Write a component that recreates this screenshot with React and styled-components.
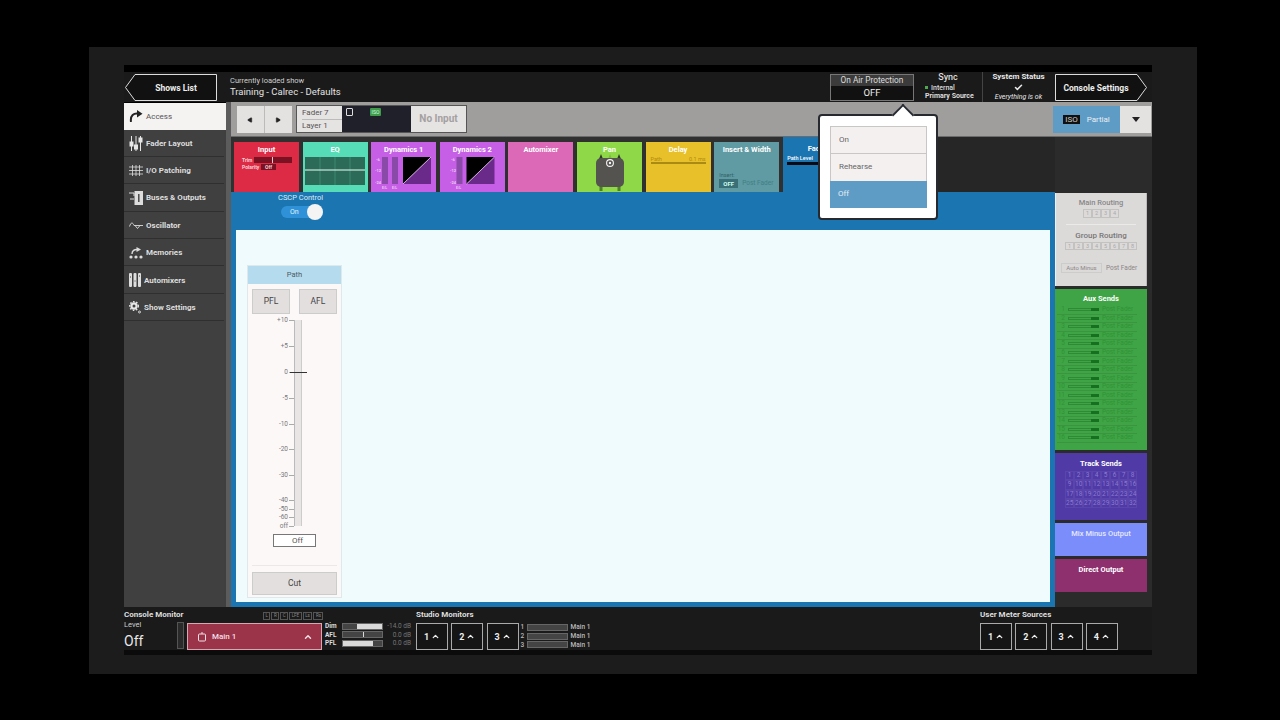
import React from 'react'
import styled, { createGlobalStyle } from 'styled-components'
import { ChevronUp, Play, Check } from 'lucide-react'

const Global = createGlobalStyle`
html, body { margin: 0; padding: 0; background: #000; height: 720px; overflow: hidden; }
body { font-family: Roboto, "Liberation Sans", sans-serif; color: #fff; }
* { box-sizing: border-box; }
`

const Page = styled.div`
width: 1280px;
height: 720px;
padding: 47px 83px 46px 89px;
background: #000;
`
const Frame = styled.div`
width: 1108px;
height: 627px;
padding: 18px 45px 19px 35px;
background: #1c1c1c;
`
const Console = styled.div`
width: 1028px;
height: 590px;
background: #000;
display: flex;
flex-direction: column;
position: relative;
`
const Header = styled.div`
margin-top: 7px;
height: 30px;
background: #1a1a1a;
display: flex;
align-items: flex-start;
flex: none;
`
const ArrowBtn = styled.div`
width: 92px;
height: 27px;
margin: 2px ${p => p.$right ? '5px' : '0'} 0 ${p => p.$right ? '0' : '1px'};
flex: none;
position: relative;
display: flex;
align-items: center;
justify-content: center;
padding: ${p => p.$right ? '0 10px 0 0' : '0 0 0 10px'};
font-size: 8.5px;
font-weight: 700;
color: #eee;
`
const ArrowShape = styled.svg`
position: absolute;
left: 0;
top: 0;
`
const ArrowLabel = styled.span`
position: relative;
`
const ShowInfo = styled.div`
margin-left: 13px;
padding-top: 4px;
flex: 1;
`
const ShowLabel = styled.div`
font-size: 7.5px;
line-height: 9px;
color: #cfcfcf;
`
const ShowName = styled.div`
font-size: 9.5px;
line-height: 12px;
margin-top: 1px;
color: #e2e2e2;
`
const Protection = styled.div`
width: 84px;
height: 27px;
margin-top: 2px;
border: 1px solid #777;
background: #111;
display: flex;
flex-direction: column;
flex: none;
`
const ProtTitle = styled.div`
height: 11px;
background: #3b3b3b;
font-size: 8.3px;
line-height: 11px;
text-align: center;
color: #ddd;
`
const ProtValue = styled.div`
flex: 1;
font-size: 9.5px;
line-height: 14px;
text-align: center;
color: #eee;
`
const SyncBox = styled.div`
width: 68px;
flex: none;
font-size: 7px;
line-height: 8px;
font-weight: 500;
color: #ddd;
padding-left: 11px;
`
const SyncTitle = styled.div`
font-size: 9px;
line-height: 11px;
text-align: center;
margin: 0 0 1px -11px;
`
const SyncLine = styled.div`
white-space: nowrap;
font-weight: ${p => p.$bold ? 700 : 500};
`
const Dot = styled.span`
display: inline-block;
width: 3px;
height: 3px;
background: #4ea84e;
margin-right: 3px;
vertical-align: 1px;
`
const StatusBox = styled.div`
width: 72px;
height: 30px;
margin-right: 1px;
flex: none;
border-left: 1px solid #444;
display: flex;
flex-direction: column;
align-items: center;
color: #e8e8e8;
`
const StatusTitle = styled.div`
font-size: 8px;
font-weight: 700;
line-height: 10px;
margin-bottom: 1px;
`
const StatusText = styled.div`
font-size: 7px;
font-style: italic;
line-height: 8px;
margin-top: 1px;
`
const Body = styled.div`
flex: 1;
display: flex;
min-height: 0;
`
const Side = styled.div`
width: 102px;
flex: none;
background: #3f3f3f;
display: flex;
flex-direction: column;
`
const SideItem = styled.div`
height: ${p => p.$active ? '27.5px' : '27.4px'};
flex: none;
margin-right: ${p => p.$active ? '0' : '2px'};
background: ${p => p.$active ? '#f5f2f2' : '#404040'};
border-top: ${p => p.$active ? '1px solid #000' : 'none'};
border-bottom: ${p => p.$active ? 'none' : '1px solid #2f2f2f'};
padding-top: ${p => p.$active ? '0' : '1px'};
display: flex;
align-items: center;
padding-left: 5px;
gap: 3px;
font-size: 8px;
font-weight: ${p => p.$active ? 400 : 700};
color: ${p => p.$active ? '#555' : '#ddd'};
`
const SideRest = styled.div`
flex: 1;
background: #404040;
margin-right: 2px;
`
const Main = styled.div`
flex: 1;
background: #262626;
border-left: 5px solid #5c5c5c;
display: flex;
flex-direction: column;
min-width: 0;
`
const Toolbar = styled.div`
height: 35px;
flex: none;
background: #a09d9d;
border-bottom: 1px solid #6b6b6b;
display: flex;
align-items: flex-start;
padding: 4px 0 0 6px;
`
const NavGroup = styled.div`
display: flex;
height: 27px;
background: #e4e1e1;
margin-right: 4px;
`
const NavBtn = styled.div`
width: 27.5px;
border-right: ${p => p.$divide ? '1px solid #bdbaba' : 'none'};
display: flex;
align-items: center;
justify-content: center;
color: #222;
`
const FaderCard = styled.div`
display: flex;
height: 28px;
width: 171px;
margin-top: -1px;
background: #e6e3e3;
border: 1px solid #555;
`
const FaderNames = styled.div`
width: 45px;
font-size: 8px;
line-height: 12px;
color: #555;
padding: 1px 0 0 5px;
`
const FaderRow = styled.div`
border-bottom: ${p => p.$line ? '1px solid #bbb' : 'none'};
height: 13px;
`
const FaderDark = styled.div`
width: 69px;
background: #20202a;
position: relative;
`
const Badge = styled.div`
position: absolute;
left: 4px;
top: 2px;
width: 7px;
height: 8px;
border: 1px solid #ddd;
border-radius: 1px;
`
const Iso = styled.div`
position: absolute;
left: 28px;
top: 2px;
width: 11px;
height: 8px;
border-radius: 1px;
background: #3f9a49;
color: #cfe;
font-size: 5px;
line-height: 8px;
text-align: center;
`
const NoInput = styled.div`
flex: 1;
text-align: center;
font-size: 10px;
font-weight: 700;
line-height: 26px;
color: #a3a0a0;
`
const Spacer = styled.div`
flex: 1;
`
const IsoGroup = styled.div`
display: flex;
height: 27px;
margin-right: 1px;
`
const IsoBlue = styled.div`
width: 67px;
background: #5f9cc5;
display: flex;
align-items: center;
justify-content: center;
gap: 7px;
font-size: 8px;
color: #e8eef4;
`
const IsoTag = styled.span`
background: #111;
color: #ccc;
font-size: 8px;
padding: 0 2px;
line-height: 9px;
`
const IsoDrop = styled.div`
width: 31px;
background: #e4e1e1;
display: flex;
align-items: center;
justify-content: center;
&::after {
  content: "";
  border-left: 4px solid transparent;
  border-right: 4px solid transparent;
  border-top: 5px solid #222;
}
`
const Workspace = styled.div`
flex: 1;
display: flex;
min-height: 0;
`
const Center = styled.div`
flex: 1;
display: flex;
flex-direction: column;
min-width: 0;
`
const Strip = styled.div`
height: 55px;
flex: none;
display: flex;
align-items: flex-start;
`
const Tiles = styled.div`
display: flex;
gap: 3.6px;
height: 55px;
padding: 5px 4px 0 3px;
background: #2f302f;
`
const Tile = styled.div`
width: 65px;
height: 50px;
background: ${p => p.$bg};
color: #fff;
font-size: 7.5px;
font-weight: 700;
text-align: center;
line-height: 15px;
position: relative;
`
const FaderTile = styled.div`
width: 68px;
height: 55px;
background: #1b75b0;
font-size: 7.5px;
font-weight: 700;
text-align: center;
line-height: 24px;
position: relative;
`
const PathLevel = styled.div`
position: absolute;
left: 4px;
top: 18px;
font-size: 5.5px;
font-weight: 500;
line-height: 7px;
`
const PathBar = styled.div`
position: absolute;
left: 4px;
top: 25px;
width: 40px;
height: 3px;
background: #0a0a14;
`
const Content = styled.div`
flex: 1;
background: #1b75b0;
display: flex;
flex-direction: column;
min-height: 0;
`
const CscpRow = styled.div`
height: 38px;
flex: none;
padding: 1px 0 0 47px;
width: 130px;
`
const CscpLabel = styled.div`
font-size: 7.5px;
line-height: 9px;
text-align: left;
color: #dcebf5;
`
const Toggle = styled.div`
margin-top: 4px;
margin-left: 3px;
width: 42px;
height: 12px;
border-radius: 6px;
background: #2f92d8;
position: relative;
font-size: 7px;
line-height: 12px;
padding-left: 9px;
color: #e4f2fb;
&::after {
  content: "";
  position: absolute;
  right: 0;
  top: -2px;
  width: 16px;
  height: 16px;
  border-radius: 50%;
  background: #f4f4f4;
}
`
const Canvas = styled.div`
margin: 0 5px;
flex: none;
height: 372px;
background: #effbfd;
padding: 35px 0 0 11px;
`
const PathPanel = styled.div`
width: 95px;
height: 333px;
background: #fdf8f8;
border: 1px solid #dfe9ec;
display: flex;
flex-direction: column;
`
const PathHead = styled.div`
height: 18px;
flex: none;
background: #b5dcee;
font-size: 7.5px;
line-height: 17px;
text-align: center;
color: #4c5a63;
`
const PflRow = styled.div`
display: flex;
justify-content: space-between;
padding: 5px 4px 0 4px;
`
const PflBtn = styled.div`
width: 38px;
height: 25px;
background: #e3dfdf;
border: 1px solid #ccc;
font-size: 8.5px;
line-height: 23px;
text-align: center;
color: #444;
`
const Scale = styled.div`
position: relative;
height: 208px;
margin-top: 5px;
flex: none;
`
const Track = styled.div`
position: absolute;
left: 46px;
top: 1px;
width: 8px;
height: 206px;
background: #e9e5e5;
border-left: 1px solid #bbb;
border-right: 1px solid #ccc;
`
const Mark = styled.div`
position: absolute;
left: 0;
width: 46px;
height: 8px;
top: ${p => p.$y - 4}px;
font-size: 6.5px;
line-height: 8px;
color: #777;
text-align: right;
padding-right: 6px;
&::after {
  content: "";
  position: absolute;
  right: 0;
  top: 4px;
  width: 5px;
  height: 1px;
  background: #aaa;
}
`
const Zero = styled.div`
position: absolute;
left: 42px;
top: 53px;
width: 17px;
height: 1px;
background: #333;
`
const OffBox = styled.div`
margin: 7px 0 0 25px;
width: 43px;
height: 13px;
flex: none;
border: 1px solid #777;
background: #fff;
font-size: 8px;
line-height: 11px;
text-align: center;
padding-left: 6px;
color: #555;
`
const CutWrap = styled.div`
margin: 18px 4px 0 4px;
padding-top: 6px;
border-top: 1px solid #ece8e8;
`
const CutBtn = styled.div`
height: 23px;
background: #e3dfdf;
border: 1px solid #ccc;
font-size: 8.5px;
line-height: 21px;
text-align: center;
color: #444;
`
const Right = styled.div`
width: 97px;
flex: none;
padding: 0 5px 0 0;
background: #2b2b2b;
display: flex;
flex-direction: column;
gap: 3px;
`
const RightTop = styled.div`
height: 53px;
flex: none;
`
const Panel = styled.div`
height: ${p => p.$h}px;
flex: none;
background: ${p => p.$bg};
color: ${p => p.$fg || '#fff'};
font-size: 7.5px;
font-weight: ${p => p.$weight || 700};
text-align: center;
padding-top: ${p => p.$top || 5}px;
line-height: 9px;
`
const RoutingPanel = styled(Panel)`
border-left: 1px solid #f1efef;
border-right: 1px solid #bdbaba;
`
const RoutingTitle = styled.div`
font-size: ${p => p.$big ? 8 : 7.5}px;
line-height: 10px;
color: ${p => p.$big ? '#777' : '#888'};
font-weight: 500;
`
const NumGrid = styled.div`
display: inline-grid;
grid-template-columns: repeat(${p => p.$cols}, 9px);
margin-top: ${p => p.$mt || 1}px;
`
const Num = styled.div`
height: ${p => p.$h || 8.6}px;
border: 1px solid ${p => p.$line};
font-size: ${p => p.$size || 5.5}px;
line-height: ${p => (p.$h || 8.6) - 2}px;
color: ${p => p.$fg};
font-weight: 400;
`
const Rule = styled.div`
height: 1px;
background: #ece9e9;
margin: 6px 10px 6px;
`
const RoutingFoot = styled.div`
display: flex;
align-items: center;
gap: 4px;
padding: 0 0 0 5px;
margin-top: 13px;
font-size: 6.5px;
font-weight: 400;
color: #8a8787;
`
const AutoMinus = styled.div`
width: 41px;
height: 10px;
line-height: 8px;
font-size: 6px;
border: 1px solid #ccc;
`
const AuxList = styled.div`
margin: 3px 10px 0 2px;
`
const AuxRow = styled.div`
height: 8.55px;
display: flex;
align-items: center;
border-bottom: 1px solid #3b953f;
font-size: 6.5px;
font-weight: 400;
color: #2f9336;
`
const AuxNum = styled.div`
width: 8px;
text-align: right;
flex: none;
`
const AuxBar = styled.div`
width: 31px;
height: 3px;
margin: 0 3px 0 3px;
border: 1px solid #2f8a35;
flex: none;
position: relative;
&::after {
  content: "";
  position: absolute;
  right: -1px;
  top: -1px;
  width: 8px;
  height: 3px;
  background: #17701f;
}
`
const MixTitle = styled.div`
font-weight: 500;
color: #e4e8ff;
`
const Footer = styled.div`
height: 48px;
flex: none;
background: #1a1a1a;
display: flex;
position: relative;
border-bottom: 5px solid #0b0b0b;
`
const MonitorCol = styled.div`
width: 53px;
flex: none;
`
const FootTitle = styled.div`
font-size: 8px;
font-weight: 700;
line-height: 10px;
margin-top: 3px;
color: #dedede;
white-space: nowrap;
`
const LevelLabel = styled.div`
font-size: 7.5px;
line-height: 10px;
color: #ccc;
`
const LevelValue = styled.div`
font-size: 14px;
line-height: 16px;
margin-top: 3px;
color: #e8e8e8;
`
const LevelMeter = styled.div`
width: 7px;
height: 27px;
margin-top: 15px;
background: #2a2a2a;
border: 1px solid #555;
flex: none;
`
const MainBtn = styled.div`
width: 135px;
height: 27px;
margin: 16px 0 0 3px;
flex: none;
background: #9c3449;
border: 1px solid #d8a8b2;
display: flex;
align-items: center;
padding: 0 8px 0 9px;
font-size: 8px;
font-weight: 500;
color: #f2dfe3;
gap: 5px;
`
const Grow = styled.div`
flex: 1;
`
const DimCol = styled.div`
margin: 15px 0 0 3px;
width: 86px;
flex: none;
display: flex;
flex-direction: column;
`
const DimRow = styled.div`
display: flex;
align-items: center;
height: 8.5px;
font-size: 6.5px;
font-weight: 700;
color: #ddd;
`
const DimName = styled.div`
width: 17px;
flex: none;
`
const DimBar = styled.div`
width: 41px;
height: 7px;
background: #444;
border: 1px solid #666;
position: relative;
flex: none;
`
const DimFill = styled.div`
position: absolute;
top: 0;
bottom: 0;
background: #d9d9d9;
`
const DimVal = styled.div`
flex: 1;
text-align: right;
font-weight: 400;
color: #777;
`
const SpeakerChannels = styled.div`
position: absolute;
left: 139px;
top: 5px;
display: flex;
gap: 1px;
`
const Channel = styled.div`
height: 8px;
padding: 0 1.5px;
border: 1px solid #555;
font-size: 4.5px;
line-height: 6px;
color: #888;
`
const Studio = styled.div`
margin-left: 5px;
width: 200px;
flex: none;
`
const MonRow = styled.div`
display: flex;
gap: 3.3px;
margin-top: 3px;
align-items: flex-start;
`
const MonBtn = styled.div`
width: 32px;
height: 27px;
border: 1px solid #aaa;
background: #151515;
display: flex;
align-items: center;
justify-content: center;
font-size: 9px;
font-weight: 700;
gap: 2px;
color: #eee;
`
const MonList = styled.div`
margin-left: -1.3px;
`
const MonItem = styled.div`
display: flex;
align-items: center;
height: 8.7px;
font-size: 6.5px;
font-weight: 500;
color: #bbb;
gap: 2px;
`
const MonNum = styled.div`
width: 4px;
`
const MonMeter = styled.div`
width: 41px;
height: 7px;
background: #444;
border: 1px solid #666;
margin-right: 1px;
`
const Meters = styled.div`
margin-left: 364px;
flex: none;
`
const Popover = styled.div`
position: absolute;
left: 694px;
top: 49px;
width: 120px;
height: 106px;
background: #fff;
border: 2px solid #262a30;
border-radius: 4px;
padding: 10px 9px 0 10px;
z-index: 3;
&::before {
  content: "";
  position: absolute;
  left: 75px;
  top: -9px;
  width: 14px;
  height: 14px;
  background: #fff;
  border-left: 2px solid #262a30;
  border-top: 2px solid #262a30;
  transform: rotate(45deg);
}
`
const PopItem = styled.div`
height: 27.3px;
background: ${p => p.$on ? '#5f9cc5' : '#f4f0f0'};
border: 1px solid #c9c6c6;
border-width: ${p => p.$on ? '0' : '1px 1px 0 1px'};
font-size: 8px;
line-height: 26px;
padding-left: 8px;
color: ${p => p.$on ? '#e5eef5' : '#666'};
position: relative;
`

const Ico = styled.svg`
flex: none;
display: block;
`

const FaderIcon = () => (
  <Ico width="14" height="15" viewBox="0 0 14 15" fill="none" stroke="#e6e6e6" strokeWidth="1">
    <path d="M2.5 0v15M7 0v15M11.5 0v15" />
    <rect x="1" y="6" width="3" height="4" fill="#e6e6e6" />
    <rect x="5.5" y="9" width="3" height="4" fill="#e6e6e6" />
    <rect x="10" y="2" width="3" height="4" fill="#e6e6e6" />
  </Ico>
)
const AccessIcon = () => (
  <Ico width="14" height="12" viewBox="0 0 14 12" fill="none" stroke="#222" strokeWidth="2">
    <path d="M2 12C1 5 5 3 9 3.5" />
    <path d="M8 0l5.5 3.8L8 7.5z" fill="#222" stroke="none" />
  </Ico>
)
const PatchIcon = () => (
  <Ico width="14" height="11" viewBox="0 0 14 11" fill="none" stroke="#ddd" strokeWidth="0.8">
    <path d="M0 2h14M0 5.5h14M0 9h14M3.5 0v11M7 0v11M10.5 0v11" />
  </Ico>
)
const BusIcon = () => (
  <Ico width="14" height="14" viewBox="0 0 14 14" fill="none" stroke="#ddd" strokeWidth="1">
    <path d="M0 2h5v3M1 8h4" />
    <rect x="6" y="0.5" width="7.5" height="13" fill="#ddd" />
    <path d="M9.8 3v8" stroke="#404040" strokeWidth="1.4" />
  </Ico>
)
const WaveIcon = () => (
  <Ico width="14" height="7" viewBox="0 0 14 7" fill="none" stroke="#ddd" strokeWidth="0.9">
    <path d="M0.5 4.5C2 0 3.5 0 5 3.5h9M6 3.5l2.5 3 2.5-3" />
  </Ico>
)
const MemIcon = () => (
  <Ico width="14" height="12" viewBox="0 0 14 12" fill="none" stroke="#ddd" strokeWidth="1.4">
    <path d="M3 7C3 3.5 5.5 2.5 8 2.5" />
    <path d="M7.5 0l4.5 2.5L7.5 5z" fill="#ddd" stroke="none" />
    <circle cx="2" cy="10" r="1.6" fill="#ddd" stroke="none" />
    <circle cx="7" cy="10" r="1.6" fill="#ddd" stroke="none" />
    <circle cx="12" cy="10" r="1.6" fill="#ddd" stroke="none" />
  </Ico>
)
const AutoIcon = () => (
  <Ico width="12" height="14" viewBox="0 0 12 14" fill="#ddd">
    <rect x="0" y="0" width="3" height="14" rx="1" />
    <rect x="4.5" y="0" width="3" height="14" rx="1" />
    <rect x="9" y="0" width="3" height="14" rx="1" />
    <path d="M1 4h1M5.5 8h1M10 3h1" stroke="#404040" />
  </Ico>
)
const GearIcon = () => (
  <Ico width="12" height="13" viewBox="0 0 12 13" fill="none" stroke="#e6e6e6">
    <circle cx="5" cy="5" r="2.6" strokeWidth="2.2" />
    <circle cx="5" cy="5" r="4.4" strokeWidth="1.2" strokeDasharray="1.6 1.6" />
    <circle cx="10.5" cy="11" r="1" strokeWidth="0.9" />
  </Ico>
)
const SpeakerIcon = () => (
  <Ico width="10" height="10" viewBox="0 0 10 10" fill="none" stroke="#f2dfe3" strokeWidth="1">
    <rect x="1.5" y="2" width="7" height="7" rx="1" />
    <path d="M5 0v2" />
  </Ico>
)
const TileDrawing = styled.svg`
position: absolute;
display: block;
left: ${p => p.$x}px;
top: ${p => p.$y}px;
`
const InputTile = () => (
  <TileDrawing $x={0} $y={14} width="65" height="20" viewBox="0 0 65 20">
    <rect x="20" y="1" width="38" height="6" fill="#7a1224" />
    <rect x="38" y="1" width="1" height="6" fill="#e8c9cd" />
    <rect x="27" y="8" width="15" height="6" fill="#7a1224" />
    <text x="8" y="6" fontSize="5" fill="#f5cfd4" fontFamily="Roboto">Trim</text>
    <text x="8" y="13" fontSize="5" fill="#f5cfd4" fontFamily="Roboto">Polarity</text>
    <text x="31" y="13" fontSize="5" fill="#f5cfd4" fontFamily="Roboto">Off</text>
  </TileDrawing>
)
const EqTile = () => (
  <TileDrawing $x={2.5} $y={15} width="60" height="28" viewBox="0 0 60 28">
    <rect width="60" height="28" fill="#2c6b57" />
    <path d="M15 0v28M30 0v28M45 0v28" stroke="#4a9c83" strokeWidth="0.6" />
    <path d="M0 13h60" stroke="#eafff8" strokeWidth="1.2" />
  </TileDrawing>
)
const DynTile = ({ two }) => {
  const sq = two ? 26.5 : 32
  const labelX = two ? 10 : 4
  return (
    <TileDrawing $x={0} $y={14} width="65" height="36" viewBox="0 0 65 36">
      <rect x={two ? 16.5 : 11} y="1" width="6" height="27" fill="#8a4aa8" />
      {!two && <rect x="21" y="1" width="6" height="27" fill="#8a4aa8" />}
      <text x={labelX + 1} y="5" fontSize="4" fill="#e9c9f2" fontFamily="Roboto">-6</text>
      <text x={labelX} y="16" fontSize="4" fill="#e9c9f2" fontFamily="Roboto">-12</text>
      <text x={labelX} y="28" fontSize="4" fill="#e9c9f2" fontFamily="Roboto">-24</text>
      <text x={two ? 16 : 11} y="33" fontSize="3.5" fill="#e9c9f2" fontFamily="Roboto">E/L</text>
      {!two && <text x="21" y="33" fontSize="3.5" fill="#e9c9f2" fontFamily="Roboto">E/L</text>}
      <path d={`M${sq} 1h28L${sq} 28z`} fill="#000" />
      <path d={`M${sq + 28} 1v27H${sq}z`} fill="#6a2a8a" />
      <path d={`M${sq} 28L${sq + 28} 1`} stroke="#e8d0ee" strokeWidth="0.8" />
    </TileDrawing>
  )
}
const PanTile = () => (
  <TileDrawing $x={19} $y={12} width="28" height="38" viewBox="0 0 28 38">
    <path d="M5 0l2 5H3zM23 0l2 5h-4z" fill="#2d3a25" />
    <path d="M14 0l2 5h-4z" fill="#7db840" />
    <path d="M3.5 30h3v7h-3zM21.5 30h3v7h-3z" fill="#4b7f2a" />
    <rect x="0" y="4" width="28" height="29" rx="5" fill="#55534f" />
    <circle cx="14" cy="9" r="3.4" fill="none" stroke="#f4f4f4" strokeWidth="1.1" />
    <circle cx="14" cy="9" r="1.2" fill="#f4f4f4" />
  </TileDrawing>
)
const DelayLabels = styled.div`
position: absolute;
left: 5px;
right: 5px;
top: 14px;
display: flex;
justify-content: space-between;
font-size: 5.5px;
line-height: 6px;
font-weight: 400;
color: #b08a10;
border-bottom: 2px solid #a98a12;
`
const InsertWrap = styled.div`
position: absolute;
left: 5px;
bottom: 4px;
text-align: left;
font-weight: 400;
font-size: 5.5px;
line-height: 7px;
color: #2f5f66;
`
const InsertRow = styled.div`
display: flex;
align-items: center;
gap: 4px;
color: #3f7f86;
font-size: 6.5px;
white-space: nowrap;
`
const InsertOff = styled.div`
background: #3a6f78;
color: #cfe;
width: 19px;
height: 9px;
line-height: 9px;
font-size: 6px;
font-weight: 700;
text-align: center;
`

const marks = [
  ['+10', 1], ['+5', 27], ['0', 53], ['-5', 79], ['-10', 105], ['-20', 130],
  ['-30', 156], ['-40', 181], ['-50', 190], ['-60', 198], ['off', 207],
]
const navItems = [
  { label: 'Fader Layout', icon: <FaderIcon /> },
  { label: 'I/O Patching', icon: <PatchIcon /> },
  { label: 'Buses & Outputs', icon: <BusIcon /> },
  { label: 'Oscillator', icon: <WaveIcon /> },
  { label: 'Memories', icon: <MemIcon /> },
  { label: 'Automixers', icon: <AutoIcon /> },
  { label: 'Show Settings', icon: <GearIcon /> },
]
const range = n => Array.from({ length: n }, (_, i) => i + 1)

const MonitorButton = ({ n }) => (
  <MonBtn>{n}<ChevronUp size={9} strokeWidth={3.5} /></MonBtn>
)

const Arrow = ({ right, children }) => (
  <ArrowBtn $right={right}>
    <ArrowShape width="92" height="27" viewBox="0 0 92 27">
      <path
        d={right ? 'M0.5 0.5H82L91.5 13.5L82 26.5H0.5z' : 'M91.5 0.5H10L0.5 13.5L10 26.5H91.5z'}
        fill="#111"
        stroke="#ddd"
      />
    </ArrowShape>
    <ArrowLabel>{children}</ArrowLabel>
  </ArrowBtn>
)

export default function App() {
  return (
    <Page>
      <Global />
      <Frame>
        <Console>
          <Header>
            <Arrow>Shows List</Arrow>
            <ShowInfo>
              <ShowLabel>Currently loaded show</ShowLabel>
              <ShowName>Training - Calrec - Defaults</ShowName>
            </ShowInfo>
            <Protection>
              <ProtTitle>On Air Protection</ProtTitle>
              <ProtValue>OFF</ProtValue>
            </Protection>
            <SyncBox>
              <SyncTitle>Sync</SyncTitle>
              <SyncLine><Dot />Internal</SyncLine>
              <SyncLine $bold>Primary Source</SyncLine>
            </SyncBox>
            <StatusBox>
              <StatusTitle>System Status</StatusTitle>
              <Check size={9} strokeWidth={4} />
              <StatusText>Everything is ok</StatusText>
            </StatusBox>
            <Arrow right>Console Settings</Arrow>
          </Header>
          <Body>
            <Side>
              <SideItem $active><AccessIcon />Access</SideItem>
              {navItems.map(n => (
                <SideItem key={n.label}>{n.icon}{n.label}</SideItem>
              ))}
              <SideRest />
            </Side>
            <Main>
              <Toolbar>
                <NavGroup>
                  <NavBtn $divide><Play size={6} fill="#222" style={{ transform: 'rotate(180deg)' }} /></NavBtn>
                  <NavBtn><Play size={6} fill="#222" /></NavBtn>
                </NavGroup>
                <FaderCard>
                  <FaderNames>
                    <FaderRow $line>Fader 7</FaderRow>
                    <FaderRow>Layer 1</FaderRow>
                  </FaderNames>
                  <FaderDark><Badge /><Iso>ISO</Iso></FaderDark>
                  <NoInput>No Input</NoInput>
                </FaderCard>
                <Spacer />
                <IsoGroup>
                  <IsoBlue><IsoTag>ISO</IsoTag>Partial</IsoBlue>
                  <IsoDrop />
                </IsoGroup>
              </Toolbar>
              <Workspace>
                <Center>
                  <Strip>
                    <Tiles>
                      <Tile $bg="#dd2b46">Input<InputTile /></Tile>
                      <Tile $bg="#56dcb6">EQ<EqTile /></Tile>
                      <Tile $bg="#c65fe6">Dynamics 1<DynTile /></Tile>
                      <Tile $bg="#c65fe6">Dynamics 2<DynTile two /></Tile>
                      <Tile $bg="#dc68b8">Automixer</Tile>
                      <Tile $bg="#8fd948">Pan<PanTile /></Tile>
                      <Tile $bg="#e8c02a">Delay<DelayLabels><span>Path</span><span>0.1 ms</span></DelayLabels></Tile>
                      <Tile $bg="#609ba3">
                        Insert &amp; Width
                        <InsertWrap>
                          Insert:
                          <InsertRow><InsertOff>OFF</InsertOff>Post Fader</InsertRow>
                        </InsertWrap>
                      </Tile>
                    </Tiles>
                    <FaderTile>Fader<PathLevel>Path Level</PathLevel><PathBar /></FaderTile>
                  </Strip>
                  <Content>
                    <CscpRow>
                      <CscpLabel>CSCP Control</CscpLabel>
                      <Toggle>On</Toggle>
                    </CscpRow>
                    <Canvas>
                      <PathPanel>
                        <PathHead>Path</PathHead>
                        <PflRow><PflBtn>PFL</PflBtn><PflBtn>AFL</PflBtn></PflRow>
                        <Scale>
                          <Track />
                          {marks.map(([t, y]) => <Mark key={t} $y={y}>{t}</Mark>)}
                          <Zero />
                        </Scale>
                        <OffBox>Off</OffBox>
                        <CutWrap><CutBtn>Cut</CutBtn></CutWrap>
                      </PathPanel>
                    </Canvas>
                  </Content>
                </Center>
                <Right>
                  <RightTop />
                  <RoutingPanel $h={93} $bg="#dcd9d9" $top={5}>
                    <RoutingTitle>Main Routing</RoutingTitle>
                    <NumGrid $cols={4}>
                      {range(4).map(n => <Num key={n} $line="#c4c1c1" $fg="#aaa">{n}</Num>)}
                    </NumGrid>
                    <Rule />
                    <RoutingTitle $big>Group Routing</RoutingTitle>
                    <NumGrid $cols={8}>
                      {range(8).map(n => <Num key={n} $line="#c4c1c1" $fg="#aaa">{n}</Num>)}
                    </NumGrid>
                    <RoutingFoot><AutoMinus>Auto Minus</AutoMinus>Post Fader</RoutingFoot>
                  </RoutingPanel>
                  <Panel $h={161} $bg="#3fa445">
                    Aux Sends
                    <AuxList>
                      {range(16).map(n => (
                        <AuxRow key={n}><AuxNum>{n}</AuxNum><AuxBar />Post Fader</AuxRow>
                      ))}
                    </AuxList>
                  </Panel>
                  <Panel $h={67} $bg="#4f3aa6" $top={6}>
                    Track Sends
                    <NumGrid $cols={8} $mt={3}>
                      {range(32).map(n => <Num key={n} $h={9.3} $size={6.5} $line="#5a45ad" $fg="#8c7bd0">{n}</Num>)}
                    </NumGrid>
                  </Panel>
                  <Panel $h={33} $bg="#7b8dfa" $top={6}><MixTitle>Mix Minus Output</MixTitle></Panel>
                  <Panel $h={33} $bg="#8e2f6e" $top={6}>Direct Output</Panel>
                </Right>
              </Workspace>
            </Main>
          </Body>
          <Footer>
            <MonitorCol>
              <FootTitle>Console Monitor</FootTitle>
              <LevelLabel>Level</LevelLabel>
              <LevelValue>Off</LevelValue>
            </MonitorCol>
            <LevelMeter />
            <MainBtn>
              <SpeakerIcon />Main 1<Grow /><ChevronUp size={10} strokeWidth={3.5} />
            </MainBtn>
            <SpeakerChannels>
              {['L', 'R', 'C', 'LFE', 'Ls', 'Rs'].map(c => <Channel key={c}>{c}</Channel>)}
            </SpeakerChannels>
            <DimCol>
              <DimRow><DimName>Dim</DimName><DimBar><DimFill style={{ left: '36%', right: 0 }} /></DimBar><DimVal>-14.0 dB</DimVal></DimRow>
              <DimRow><DimName>AFL</DimName><DimBar><DimFill style={{ left: '50%', width: 1 }} /></DimBar><DimVal>0.0 dB</DimVal></DimRow>
              <DimRow><DimName>PFL</DimName><DimBar><DimFill style={{ left: 0, width: '76%' }} /></DimBar><DimVal>0.0 dB</DimVal></DimRow>
            </DimCol>
            <Studio>
              <FootTitle>Studio Monitors</FootTitle>
              <MonRow>
                {range(3).map(n => <MonitorButton key={n} n={n} />)}
                <MonList>
                  {range(3).map(n => (
                    <MonItem key={n}><MonNum>{n}</MonNum><MonMeter />Main 1</MonItem>
                  ))}
                </MonList>
              </MonRow>
            </Studio>
            <Meters>
              <FootTitle>User Meter Sources</FootTitle>
              <MonRow>
                {range(4).map(n => <MonitorButton key={n} n={n} />)}
              </MonRow>
            </Meters>
          </Footer>
          <Popover>
            <PopItem>On</PopItem>
            <PopItem>Rehearse</PopItem>
            <PopItem $on>Off</PopItem>
          </Popover>
        </Console>
      </Frame>
    </Page>
  )
}
